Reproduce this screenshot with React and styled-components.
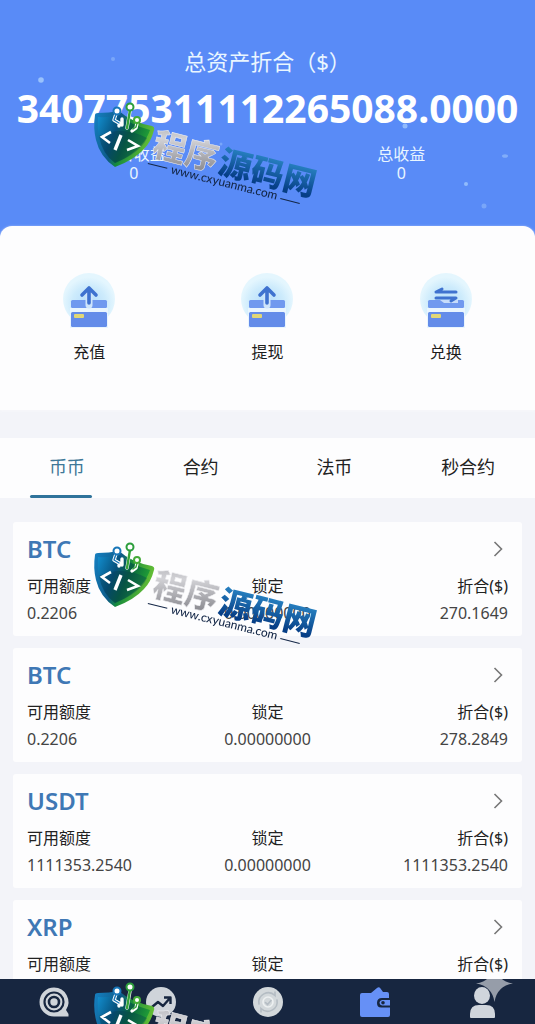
import styled, { createGlobalStyle } from "styled-components";

const GlobalStyle = createGlobalStyle`
  * {
    box-sizing: border-box;
  }
  body {
    margin: 0;
    background: #f3f4f9;
    color: #2b2b2b;
    font-family: "Noto Sans", "Noto Sans CJK SC", sans-serif;
    font-size: 16px;
  }
  button {
    margin: 0;
    padding: 0;
    border: none;
    background: none;
    color: inherit;
    font: inherit;
    cursor: pointer;
  }
`;

const Page = styled.div`
  position: relative;
  min-height: 100vh;
  padding-bottom: 32px;
`;

const Header = styled.header`
  position: relative;
  display: flex;
  flex-direction: column;
  align-items: center;
  padding: 46px 0 56px;
  background: #598bf7;
  color: #e9f6ff;
`;

const Sparks = styled.svg`
  position: absolute;
  inset: 0;
  width: 100%;
  height: 100%;
`;

const Total = styled.h1`
  margin: 0;
  font-size: 22px;
  font-weight: 400;
  line-height: 30px;
`;

const Amount = styled.div`
  margin: 8px 0 12px;
  color: #fff;
  font-size: 39px;
  font-weight: 700;
  line-height: 48px;
  white-space: nowrap;
`;

const Stats = styled.dl`
  display: grid;
  grid-template-columns: repeat(2, 1fr);
  width: 100%;
  margin: 0;
  text-align: center;
`;

const StatLabel = styled.dt`
  line-height: 20px;
`;

const StatValue = styled.dd`
  margin: 0;
  line-height: 18px;
`;

const Actions = styled.section`
  position: relative;
  display: grid;
  grid-template-columns: repeat(3, 1fr);
  margin-top: -12px;
  padding: 46px 0;
  border-radius: 12px 12px 0 0;
  background: #fdfdfe;
  box-shadow: 0 1px 3px #f8f8fb;
`;

const Action = styled.button`
  display: flex;
  flex-direction: column;
  align-items: center;
  gap: 12px;
  color: #1d1d1d;
  line-height: 24px;

  svg {
    width: 56px;
    height: 56px;
  }
`;

const Tabs = styled.nav`
  display: grid;
  grid-template-columns: repeat(4, 1fr);
  margin-top: 28px;
  background: #fdfdfe;
`;

const Tab = styled.button`
  position: relative;
  height: 60px;
  padding-bottom: 4px;
  color: ${(props) => (props.$active ? "#3f7898" : "#222")};
  font-size: 18px;

  &::after {
    content: "";
    display: ${(props) => (props.$active ? "block" : "none")};
    position: absolute;
    bottom: 0;
    left: 30px;
    width: 62px;
    height: 3px;
    border-radius: 2px;
    background: #2f739b;
  }
`;

const CoinList = styled.main`
  display: flex;
  flex-direction: column;
  gap: 12px;
  padding: 24px 13px 0;
`;

const CoinCard = styled.article`
  padding: 13px 14px 10px;
  border-radius: 3px;
  background: #fdfdfe;
`;

const CoinHead = styled.button`
  display: flex;
  justify-content: space-between;
  align-items: center;
  width: 100%;
  height: 28px;
  padding-right: 5px;
`;

const CoinName = styled.span`
  color: #3f78b5;
  font-size: 24px;
  font-weight: 600;
  line-height: 28px;
`;

const CoinData = styled.dl`
  display: grid;
  grid-template-columns: repeat(3, 1fr);
  margin: 9px 0 0;
`;

const CoinCell = styled.div`
  text-align: ${(props) => props.$align};
`;

const CellLabel = styled.dt`
  color: #222;
  line-height: 28px;
`;

const CellValue = styled.dd`
  margin: 0;
  color: #444;
  line-height: 26px;
`;

const BottomBar = styled.nav`
  position: fixed;
  right: 0;
  bottom: 0;
  left: 0;
  display: grid;
  grid-template-columns: repeat(5, 1fr);
  height: 45px;
  background: #172640;
`;

const BarButton = styled.button`
  display: flex;
  justify-content: center;
  align-items: center;

  svg {
    width: 34px;
    height: 34px;
  }
`;

const MarkLayer = styled.div`
  position: fixed;
  inset: 0;
  display: flex;
  flex-direction: column;
  gap: 320px;
  padding: 90px 0 0 85px;
  overflow: hidden;
  pointer-events: none;
`;

const Mark = styled.svg`
  flex: none;
  width: 250px;
  height: 120px;
`;

const Star = styled.svg`
  position: fixed;
  right: 22px;
  bottom: 22px;
  width: 37px;
  height: 37px;
  pointer-events: none;
`;

const actions = [
  { label: "充值", type: "up" },
  { label: "提现", type: "up" },
  { label: "兑换", type: "swap" },
];

const tabs = ["币币", "合约", "法币", "秒合约"];

const coins = [
  { name: "BTC", available: "0.2206", locked: "0.00000000", total: "270.1649" },
  { name: "BTC", available: "0.2206", locked: "0.00000000", total: "278.2849" },
  {
    name: "USDT",
    available: "1111353.2540",
    locked: "0.00000000",
    total: "1111353.2540",
  },
  { name: "XRP" },
];

const ActionIcon = ({ type }) => (
  <svg viewBox="0 0 56 56" aria-hidden="true">
    <defs>
      <radialGradient id="halo" cx="50%" cy="58%" r="50%">
        <stop offset="0" stopColor="#b5dcfb" />
        <stop offset="0.65" stopColor="#cdebfc" />
        <stop offset="1" stopColor="#e4f6fe" />
      </radialGradient>
    </defs>
    <circle cx="28" cy="27" r="26" fill="url(#halo)" />
    <path d="M9 36h38v20H9z" fill="#e9f5fe" />
    <rect x="10" y="28" width="36" height="8" rx="1.5" fill="#7099ef" />
    <rect x="10" y="40" width="36" height="15" rx="1.5" fill="#638ce9" />
    <rect x="13" y="42" width="10" height="4" rx="1" fill="#e1d776" />
    {type === "up" ? (
      <>
        <path d="M28 33V20" stroke="#cfe5fb" strokeWidth="7" strokeLinecap="round" />
        <path
          d="M28 31V17M21 23 28 16 35 23"
          fill="none"
          stroke="#3f72cf"
          strokeWidth="3.6"
          strokeLinecap="round"
          strokeLinejoin="round"
        />
      </>
    ) : (
      <>
        <path d="M22 28h18v3H26z" fill="#c6dcfa" />
        <path
          d="M18 20h20M18 20l6-3M18 26h20l-5 3"
          fill="none"
          stroke="#3f72cf"
          strokeWidth="3"
          strokeLinecap="round"
          strokeLinejoin="round"
        />
      </>
    )}
  </svg>
);

const Chevron = () => (
  <svg width="10" height="18" viewBox="0 0 10 18" aria-hidden="true">
    <path d="M1.5 2 8.5 9l-7 7" fill="none" stroke="#777" strokeWidth="1.6" />
  </svg>
);

const HomeIcon = () => (
  <svg viewBox="0 0 34 34" aria-hidden="true">
    <path d="M17 2.5a14.5 14.5 0 1 0 0 29h14.5v-2.5l-2.5-4A14.5 14.5 0 0 0 17 2.5z" fill="#cfd4da" />
    <circle cx="17" cy="17" r="9.500" fill="none" stroke="#172640" strokeWidth="2.2" />
    <circle cx="17" cy="17" r="5" fill="none" stroke="#172640" strokeWidth="2.6" />
  </svg>
);

const TrendIcon = () => (
  <svg viewBox="0 0 34 34" aria-hidden="true">
    <circle cx="17" cy="17" r="15" fill="#cfd4da" />
    <path
      d="M8 22l6-5 5 4 7-8M20 12.5h6.5V19"
      fill="none"
      stroke="#172640"
      strokeWidth="2.4"
      strokeLinejoin="round"
    />
  </svg>
);

const TradeIcon = () => (
  <svg viewBox="0 0 34 34" aria-hidden="true">
    <circle cx="17" cy="17" r="15" fill="#d3d8db" />
    <g fill="none" stroke="#b4bcc3" strokeWidth="1.6" strokeLinecap="round">
      <path d="M8 19a9.5 9.5 0 0 1 16-8.5V7M26 15a9.5 9.5 0 0 1-16 8.5V27" />
      <circle cx="17" cy="17" r="5" stroke="#edf0f1" />
      <path d="M14.5 17.5l2 2 3.5-4" />
    </g>
  </svg>
);

const WalletIcon = () => (
  <svg viewBox="0 0 34 34" aria-hidden="true">
    <path
      d="M4 8h9l6-5q2-1.500 3.500.5L25 7h4q2 0 2 2v4h-7q-5 0-5 5t5 4.500h8V30q0 2-2 2H4q-2 0-2-2V10q0-2 2-2z"
      fill="#6690f6"
    />
    <path d="M24 15h8v5.500h-8q-2.500-.5-2.500-2.700T24 15z" fill="#6690f6" />
    <circle cx="25" cy="17.8" r="1.8" fill="#172640" />
  </svg>
);

const UserIcon = () => (
  <svg viewBox="0 0 34 34" aria-hidden="true">
    <ellipse cx="17" cy="10.5" rx="8" ry="8.5" fill="#d0d5dc" />
    <path d="M5 32v-3q0-9 9-9h7q9 0 9 9v3q0 1-1 1H6q-1 0-1-1z" fill="#d0d5dc" />
  </svg>
);

const barItems = [
  { label: "首页", Icon: HomeIcon },
  { label: "行情", Icon: TrendIcon },
  { label: "交易", Icon: TradeIcon },
  { label: "资产", Icon: WalletIcon },
  { label: "我的", Icon: UserIcon },
];

const SiteMark = () => (
  <Mark viewBox="0 0 250 120">
    <defs>
      <linearGradient id="shieldEdge" x1="0" y1="0" x2="1" y2="0.3">
        <stop offset="0" stopColor="#1681c4" />
        <stop offset="0.45" stopColor="#0d5a86" />
        <stop offset="0.6" stopColor="#168a3c" />
        <stop offset="1" stopColor="#62bd35" />
      </linearGradient>
      <linearGradient id="shieldFace" x1="0" y1="0" x2="1" y2="0.4">
        <stop offset="0" stopColor="#138fd0" />
        <stop offset="0.4" stopColor="#07517c" />
        <stop offset="0.65" stopColor="#09643f" />
        <stop offset="1" stopColor="#21a036" />
      </linearGradient>
      <linearGradient id="silver" x1="0" y1="0" x2="0.3" y2="1">
        <stop offset="0" stopColor="#a9a9ae" />
        <stop offset="0.4" stopColor="#d2d2d6" />
        <stop offset="1" stopColor="#8b8b91" />
      </linearGradient>
      <linearGradient id="blue" x1="0" y1="0" x2="0" y2="1">
        <stop offset="0.2" stopColor="#2882c2" />
        <stop offset="0.8" stopColor="#063e86" />
      </linearGradient>
    </defs>
    <path
      d="M10 25Q10 23 13 23Q24 23 34 21Q46 32 67 36Q70 37 69 40Q66 52 59 59Q49 70 30 77Q15 67 11 50Q8 38 10 25z"
      fill="url(#shieldEdge)"
    />
    <path
      d="M13 27Q25 28 34 25Q46 35 65 40Q62 49 56 55Q47 66 30 73Q18 64 14 47Q12 37 13 27z"
      fill="url(#shieldFace)"
    />
    <path d="M14 46Q38 35 62 48Q55 63 30 73Q17 64 14 46z" fill="#04364e" opacity="0.35" />
    <g fill="none" strokeLinecap="round" strokeLinejoin="round">
      <path d="M31 24l-2 6 5 3v3M45 21l-3 17M52 33l-1 5-4 3M37 29v6" stroke="#fff" strokeWidth="3.4" />
      <path d="M31 24l-2 6 5 3" stroke="#1876b8" strokeWidth="1.4" />
      <path d="M45 20l-3 18" stroke="#35a338" strokeWidth="2.4" />
      <path d="M52 33l-1 4-3 2" stroke="#35a338" strokeWidth="1.4" />
      <circle cx="32" cy="21" r="3.5" fill="#fff" stroke="#1876b8" strokeWidth="2" />
      <circle cx="45" cy="17" r="3.5" fill="#fff" stroke="#2c9e3c" strokeWidth="2" />
      <circle cx="52" cy="30" r="3" fill="#fff" stroke="#43aa37" strokeWidth="2" />
      <path d="M26 42l-9 5 8 6M43 50l10 6-11 4" stroke="#fff" strokeWidth="2.6" strokeLinecap="butt" strokeLinejoin="miter" />
      <path d="M36 45l-6 15" stroke="#fff" strokeWidth="3.4" strokeLinecap="butt" />
    </g>
    <g transform="translate(66 65) rotate(14)">
      <g fontFamily="Noto Sans CJK SC, sans-serif" fontSize="33" fontWeight="900">
        <text x="0" y="0" fill="url(#silver)" stroke="#ededf0" strokeWidth="0.5">
          程序
        </text>
        <text x="68" y="1" fill="url(#blue)">
          源码网
        </text>
      </g>
      <text x="23" y="13" fill="#142747" fontFamily="Lato, sans-serif" fontSize="12" fontWeight="500">
        www.cxyuanma.com
      </text>
      <path d="M-1 9h20M136 11h20" stroke="#142747" strokeWidth="1" />
    </g>
  </Mark>
);

const App = () => {
  return (
    <>
      <GlobalStyle />
      <Page>
        <Header>
          <Sparks viewBox="0 0 535 238" aria-hidden="true">
            <g fill="#a9d0fd">
              <circle cx="41" cy="80" r="2.8" opacity="0.8" />
              <circle cx="113" cy="59" r="2" opacity="0.4" />
              <circle cx="405" cy="126" r="2.5" opacity="0.7" />
              <ellipse cx="505" cy="156" rx="3" ry="1.8" opacity="0.5" />
              <circle cx="466" cy="184" r="2" opacity="0.7" />
              <circle cx="484" cy="206" r="2.5" opacity="0.4" />
              <circle cx="221" cy="144" r="1.5" opacity="0.4" />
            </g>
          </Sparks>
          <Total>总资产折合（$）</Total>
          <Amount>340775311112265088.0000</Amount>
          <Stats>
            <div>
              <StatLabel>今日收益</StatLabel>
              <StatValue>0</StatValue>
            </div>
            <div>
              <StatLabel>总收益</StatLabel>
              <StatValue>0</StatValue>
            </div>
          </Stats>
        </Header>
        <Actions>
          {actions.map((action) => (
            <Action key={action.label} type="button">
              <ActionIcon type={action.type} />
              {action.label}
            </Action>
          ))}
        </Actions>
        <Tabs>
          {tabs.map((tab, index) => (
            <Tab key={tab} type="button" $active={index === 0}>
              {tab}
            </Tab>
          ))}
        </Tabs>
        <CoinList>
          {coins.map((coin, index) => (
            <CoinCard key={index}>
              <CoinHead type="button">
                <CoinName>{coin.name}</CoinName>
                <Chevron />
              </CoinHead>
              <CoinData>
                <CoinCell $align="left">
                  <CellLabel>可用额度</CellLabel>
                  {coin.available && <CellValue>{coin.available}</CellValue>}
                </CoinCell>
                <CoinCell $align="center">
                  <CellLabel>锁定</CellLabel>
                  {coin.locked && <CellValue>{coin.locked}</CellValue>}
                </CoinCell>
                <CoinCell $align="right">
                  <CellLabel>折合($)</CellLabel>
                  {coin.total && <CellValue>{coin.total}</CellValue>}
                </CoinCell>
              </CoinData>
            </CoinCard>
          ))}
        </CoinList>
      </Page>
      <BottomBar>
        {barItems.map(({ label, Icon }) => (
          <BarButton key={label} type="button" aria-label={label}>
            <Icon />
          </BarButton>
        ))}
      </BottomBar>
      <MarkLayer>
        <SiteMark />
        <SiteMark />
        <SiteMark />
      </MarkLayer>
      <Star viewBox="0 0 37 37" aria-hidden="true">
        <path
          d="M18.5 0Q21 16 37 18.5Q21 21 18.5 37Q16 21 0 18.5Q16 16 18.5 0z"
          fill="#fff"
          opacity="0.55"
        />
      </Star>
    </>
  );
};

export default App;
